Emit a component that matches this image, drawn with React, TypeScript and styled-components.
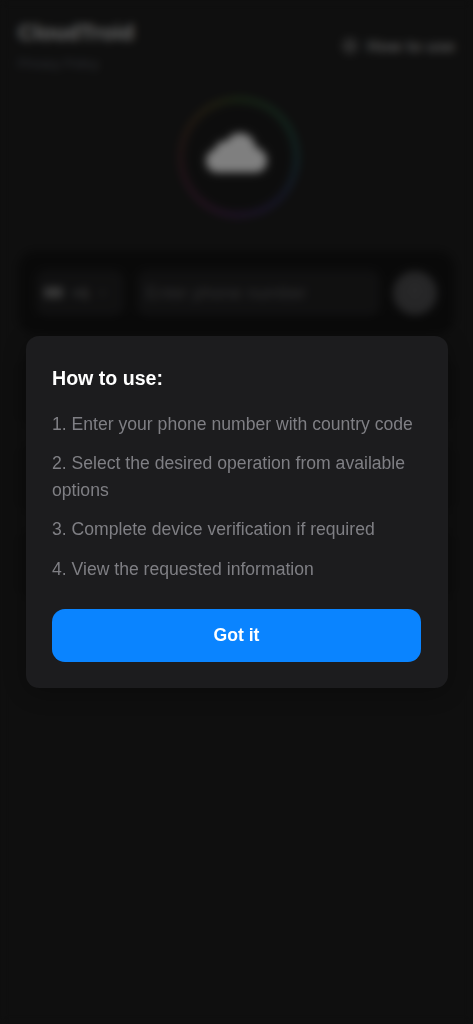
import React from "react";
import styled, { createGlobalStyle } from "styled-components";

const GlobalStyle = createGlobalStyle`
  * { box-sizing: border-box; }
  body {
    margin: 0;
    background: #1e1e1e;
    font-family: "Liberation Sans", Arial, sans-serif;
  }
`;

const Page = styled.div`
  height: 1024px;
  overflow: hidden;
  padding: 18px;
  background: #1e1e1e;
  color: #fff;
`;

const Header = styled.header`
  display: flex;
  justify-content: space-between;
  align-items: center;
  height: 56px;
`;

const Brand = styled.h1`
  margin: 0 0 8px;
  font-size: 22px;
  line-height: 28px;
  color: #d4d4d4;
`;

const Policy = styled.a`
  display: block;
  font-size: 13px;
  line-height: 18px;
  color: #5a5e68;
`;

const HelpLink = styled.div`
  display: flex;
  align-items: center;
  gap: 8px;
  font-size: 16.5px;
  font-weight: 600;
  color: #a0a0a0;
`;

const Ring = styled.div`
  width: 120px;
  height: 120px;
  margin: 23px auto 0;
  padding: 4.5px;
  border-radius: 50%;
  background: conic-gradient(
    from 0deg,
    #33502a,
    #265040 60deg,
    #244c54 95deg,
    #313160 140deg,
    #4c2a64 180deg,
    #5a2850 215deg,
    #552b36 260deg,
    #503826 300deg,
    #484624 335deg,
    #33502a
  );
`;

const RingArea = styled.div`
  padding-left: 4px;
`;

const RingCore = styled.div`
  display: flex;
  align-items: center;
  justify-content: center;
  height: 100%;
  border-radius: 50%;
  background: #1b1b1b;
`;

const PhoneCard = styled.section`
  display: flex;
  align-items: center;
  gap: 13px;
  height: 83px;
  margin-top: 34px;
  padding: 0 18px;
  border-radius: 18px;
  background: #131313;
`;

const CountrySelect = styled.div`
  display: flex;
  align-items: center;
  gap: 9px;
  width: 88px;
  height: 46px;
  padding-left: 8px;
  border-radius: 11px;
  background: #202021;
  color: #808080;
  font-size: 15px;
  font-weight: 600;
`;

const Flag = styled.span`
  width: 19px;
  height: 11px;
  border-radius: 2px;
  background: #707070;
`;

const PhoneField = styled.div`
  flex: 1;
  height: 46px;
  padding-left: 9px;
  border-radius: 11px;
  background: #202021;
  color: #5a5a5c;
  font-size: 17.6px;
  line-height: 46px;
`;

const SendButton = styled.div`
  display: flex;
  align-items: center;
  justify-content: center;
  width: 44px;
  height: 44px;
  border-radius: 50%;
  background: #4c4c4e;
`;

const Operations = styled.div`
  display: grid;
  gap: 14px;
  margin-top: 22px;
`;

const OperationCard = styled.div`
  height: 72px;
  border-radius: 16px;
  background: #1a1a1a;
`;

const Overlay = styled.div`
  position: fixed;
  inset: 0;
  display: flex;
  align-items: center;
  justify-content: center;
  padding: 0 25.5px;
  background: rgba(0, 0, 0, 0.5);
  backdrop-filter: blur(4.4px);
`;

const Dialog = styled.div`
  width: 100%;
  height: 352px;
  padding: 26.5px;
  border-radius: 13px;
  background: #1c1c1e;
  box-shadow: 0 4px 26px rgba(0, 0, 0, 0.3);
`;

const DialogTitle = styled.h2`
  margin: 0 0 17.4px;
  font-size: 19.6px;
  line-height: 31px;
  color: #fff;
`;

const Step = styled.p`
  margin: 0 0 13.2px;
  font-size: 17.6px;
  line-height: 26.4px;
  color: #7f7f84;
`;

const ConfirmButton = styled.button`
  display: block;
  width: 100%;
  height: 53px;
  margin-top: 26.4px;
  border: 0;
  border-radius: 13px;
  background: #0a84ff;
  color: #fff;
  font-family: inherit;
  font-size: 17.6px;
  font-weight: 600;
`;

const steps = [
  "1. Enter your phone number with country code",
  "2. Select the desired operation from available options",
  "3. Complete device verification if required",
  "4. View the requested information",
];

export default function App() {
  return (
    <>
      <GlobalStyle />
      <Page>
        <Header>
          <div>
            <Brand>CloudTroid</Brand>
            <Policy>Privacy Policy</Policy>
          </div>
          <HelpLink>
            <svg width="18" height="18" viewBox="0 0 18 18">
              <circle cx="9" cy="9" r="8.500" fill="#505050" />
              <path d="M9 8v5M9 4.800v1.600" stroke="#777" strokeWidth="2" />
            </svg>
            How to use
          </HelpLink>
        </Header>
        <RingArea>
          <Ring>
            <RingCore>
              <svg width="61" height="40" viewBox="0 0 64 42" transform="translate(-2 -4)">
                <path
                  fill="#fff"
                  d="M12 41.500C5 41.500 0 36 0 29.500C0 23 4 18.500 9.500 17C11 11 16 7.500 22 8.500C25 3 30 0 36 0C44.500 0 51 6.500 52 15C59 17 64 22 64 29C64 36 59 41.500 52 41.500Z"
                />
              </svg>
            </RingCore>
          </Ring>
        </RingArea>
        <PhoneCard>
          <CountrySelect>
            <Flag />
            +1
            <svg width="9" height="6" viewBox="0 0 9 6" fill="none" stroke="#505050" strokeWidth="1.5">
              <path d="M1 1l3.500 3.500L8 1" />
            </svg>
          </CountrySelect>
          <PhoneField>Enter phone number</PhoneField>
          <SendButton>
            <svg width="18" height="18" viewBox="0 0 18 18" fill="none" stroke="#58585a" strokeWidth="2">
              <path d="M9 16V2M3 8l6-6 6 6" />
            </svg>
          </SendButton>
        </PhoneCard>
        <Operations>
          <OperationCard />
          <OperationCard />
          <OperationCard />
        </Operations>
      </Page>
      <Overlay>
        <Dialog role="dialog">
          <DialogTitle>How to use:</DialogTitle>
          {steps.map((step) => (
            <Step key={step}>{step}</Step>
          ))}
          <ConfirmButton>Got it</ConfirmButton>
        </Dialog>
      </Overlay>
    </>
  );
}
